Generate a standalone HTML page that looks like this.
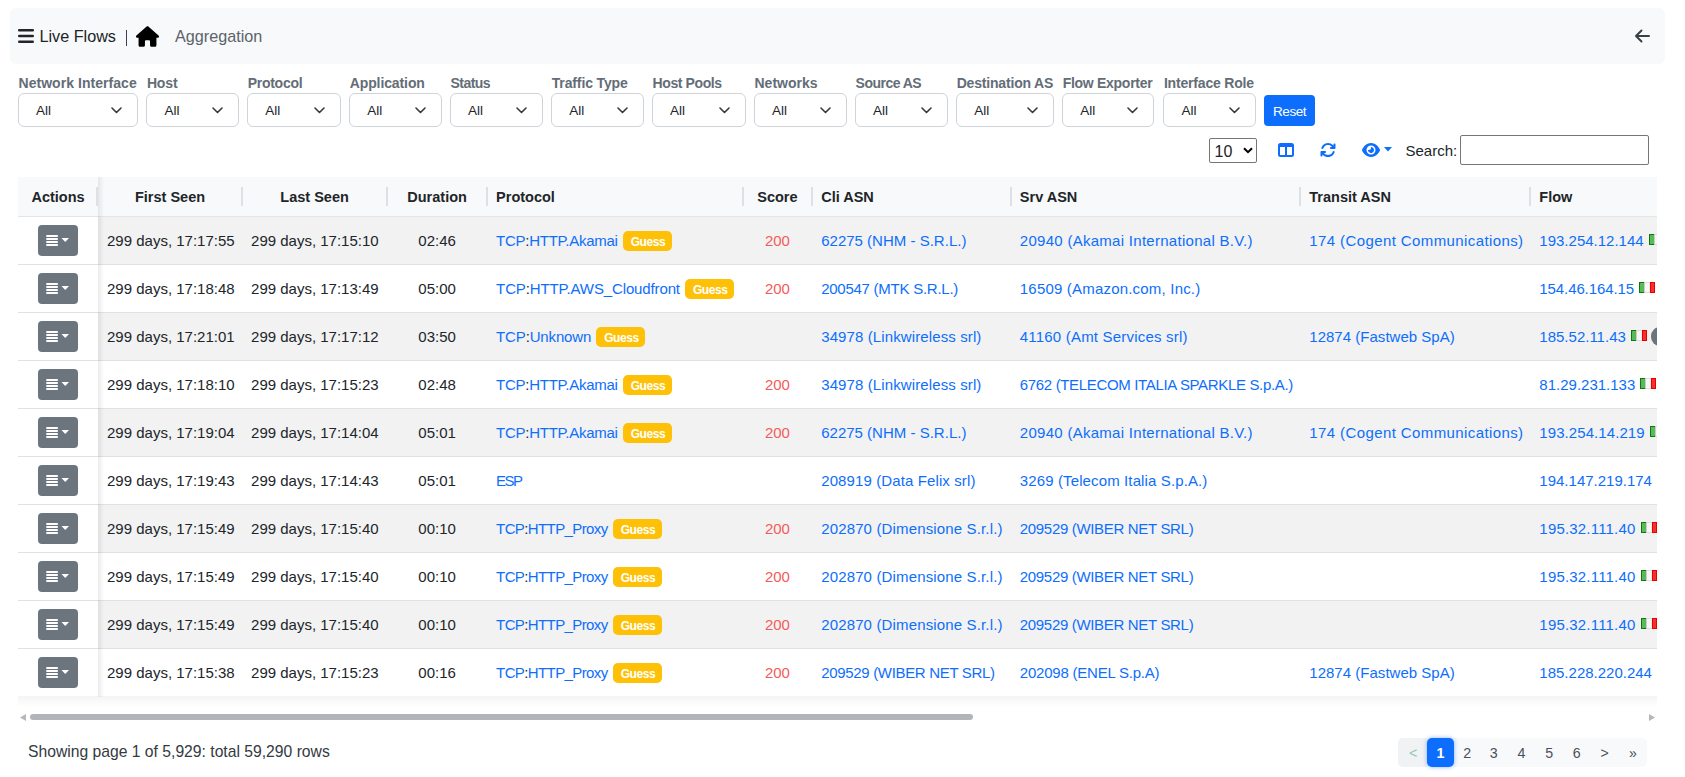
<!DOCTYPE html>
<html><head><meta charset="utf-8">
<style>
*{box-sizing:border-box;margin:0;padding:0}
html,body{width:1685px;height:777px;overflow:hidden;background:#fff}
body{font-family:"Liberation Sans",sans-serif;color:#212529;position:relative}
.abs{position:absolute}
#topbar{left:10px;top:8px;width:1655px;height:56px;background:#f8f9fa;border-radius:6px}
.t{position:absolute;white-space:nowrap;line-height:1}
.hdr{font-size:16.2px}
.lbl{font-weight:bold;font-size:14px;color:#636d77}
.sel{position:absolute;top:93px;height:34px;border:1px solid #ced4da;border-radius:6px;background:#fff}
.sel span{position:absolute;left:17px;top:10px;font-size:13.5px;color:#212529;line-height:1}
.sel svg{position:absolute;right:15px;top:13px}
#reset{left:1264px;top:95px;width:51px;height:31px;background:#0d6efd;border-radius:4px;color:#fff;font-size:14.5px}
#tbl{left:18px;top:177px;width:1639px;height:520px;overflow:hidden}
table{border-collapse:collapse;table-layout:fixed;width:1712.5px}
th{height:39px;background:#f8f9fa;font-weight:bold;font-size:14.5px;text-align:left;padding:0 9px;border-bottom:1px solid #e3e6e9;position:relative;white-space:nowrap}
th.c,td.c{text-align:center}
th .sep{position:absolute;right:-1px;top:10px;width:2px;height:19px;background:#dde0e4;z-index:3}
th.act .sep{right:0}
td{height:48px;font-size:15px;padding:0 9px;border-bottom:1px solid #dee2e6;white-space:nowrap}
tr.odd td{background:#f2f2f2}
td.act{position:relative;background:#fff !important;text-align:center;padding:0}
th.act{text-align:center;padding:0}
a{color:#0d6efd;text-decoration:none}
.k{color:#212529}
.badge{display:inline-block;background:#ffc107;color:#fff;font-weight:bold;font-size:12px;letter-spacing:-0.4px;padding:0 6.6px 0 8px;height:20px;line-height:23px;border-radius:5px;vertical-align:0px;margin:-4px 0 -4px 5px}
.red{color:#f55a5a}
.btn{display:inline-block;width:40px;height:31px;background:#6c757d;border-radius:4px;vertical-align:middle;position:relative}
.flag{display:inline-block;vertical-align:1px;margin-left:5px}
.circ{display:inline-block;width:20px;height:19px;border-radius:9px;background:#6c757d;margin:-10px 0 -10px 4px;vertical-align:6px}
#actshadow{position:absolute;left:80px;top:0;width:6px;height:520px;background:linear-gradient(90deg,rgba(0,0,0,.08),rgba(0,0,0,0))}
#tshadow{left:18px;top:696px;width:1639px;height:11px;background:linear-gradient(180deg,rgba(0,0,0,.045),rgba(0,0,0,0))}
.pgi,.pgact{font-size:14.2px;text-align:center;line-height:30px}
.pgact{background:#0d6efd;color:#fff;border-radius:5px;box-shadow:0 0 4px rgba(13,110,253,.5);font-weight:bold}

tbody tr:last-child td{border-bottom:none}
.thx{position:relative;top:1px}

</style></head><body>
<div id="topbar" class="abs"></div>
<svg class="abs" style="left:18px;top:29px" width="16" height="14" viewBox="0 0 16 14"><rect x="0" y="0" width="16" height="2.6" rx="1.3" fill="#212529"/><rect x="0" y="5.7" width="16" height="2.6" rx="1.3" fill="#212529"/><rect x="0" y="11.4" width="16" height="2.6" rx="1.3" fill="#212529"/></svg>
<div class="t hdr" style="left:39.5px;top:28px;">Live Flows</div>
<div class="abs" style="left:125.8px;top:30px;width:1px;height:16px;background:#3d3f4a"></div>
<svg class="abs" style="left:136px;top:26px" width="23" height="21" viewBox="0 0 576 512"><path fill="#000" d="M575.8 255.5c0 18-15 32.1-32 32.1h-32l.7 160.2c0 2.7-.2 5.400-.5 8.100V472c0 22.100-17.900 40-40 40H456c-1.100 0-2.200 0-3.300-.1-1.400 .1-2.800 .1-4.200 .1H416 392c-22.100 0-40-17.900-40-40V448 384c0-17.700-14.300-32-32-32H256c-17.700 0-32 14.300-32 32v64 24c0 22.100-17.900 40-40 40H160 128.100c-1.500 0-3-.1-4.500-.2-1.200 .1-2.400 .2-3.600 .2H104c-22.100 0-40-17.900-40-40V360c0-.9 0-1.900 .1-2.800V287.600H32c-18 0-32-14-32-32.100 0-9 3-17 10-24L266.400 8c7-7 15-8 22-8s15 2 21 7L564.800 231.500c8 7 12 15 11 24z"/></svg>
<div class="t hdr" style="left:175px;top:28px;color:#5c636a">Aggregation</div>
<svg class="abs" style="left:1634px;top:29px" width="16" height="14" viewBox="0 0 16 14"><path d="M15 7H2M7.5 1.5L2 7l5.5 5.5" stroke="#3a4047" stroke-width="2" fill="none" stroke-linecap="round" stroke-linejoin="round"/></svg>
<div class="t lbl" style="left:18.5px;top:76px;letter-spacing:0.044px">Network Interface</div>
<div class="sel" style="left:18px;width:120px"><span>All</span><svg width="11" height="7" viewBox="0 0 11 7"><path d="M1 1l4.5 4.5L10 1" stroke="#343a40" stroke-width="1.6" fill="none" stroke-linecap="round" stroke-linejoin="round"/></svg></div>
<div class="t lbl" style="left:146.9px;top:76px;letter-spacing:-0.133px">Host</div>
<div class="sel" style="left:146.4px;width:92.4px"><span>All</span><svg width="11" height="7" viewBox="0 0 11 7"><path d="M1 1l4.5 4.5L10 1" stroke="#343a40" stroke-width="1.6" fill="none" stroke-linecap="round" stroke-linejoin="round"/></svg></div>
<div class="t lbl" style="left:247.7px;top:76px;letter-spacing:-0.271px">Protocol</div>
<div class="sel" style="left:247.2px;width:93.4px"><span>All</span><svg width="11" height="7" viewBox="0 0 11 7"><path d="M1 1l4.5 4.5L10 1" stroke="#343a40" stroke-width="1.6" fill="none" stroke-linecap="round" stroke-linejoin="round"/></svg></div>
<div class="t lbl" style="left:349.7px;top:76px;letter-spacing:-0.1px">Application</div>
<div class="sel" style="left:349.2px;width:92.6px"><span>All</span><svg width="11" height="7" viewBox="0 0 11 7"><path d="M1 1l4.5 4.5L10 1" stroke="#343a40" stroke-width="1.6" fill="none" stroke-linecap="round" stroke-linejoin="round"/></svg></div>
<div class="t lbl" style="left:450.6px;top:76px;letter-spacing:-0.58px">Status</div>
<div class="sel" style="left:450.1px;width:92.6px"><span>All</span><svg width="11" height="7" viewBox="0 0 11 7"><path d="M1 1l4.5 4.5L10 1" stroke="#343a40" stroke-width="1.6" fill="none" stroke-linecap="round" stroke-linejoin="round"/></svg></div>
<div class="t lbl" style="left:551.7px;top:76px;letter-spacing:-0.127px">Traffic Type</div>
<div class="sel" style="left:551.2px;width:92.7px"><span>All</span><svg width="11" height="7" viewBox="0 0 11 7"><path d="M1 1l4.5 4.5L10 1" stroke="#343a40" stroke-width="1.6" fill="none" stroke-linecap="round" stroke-linejoin="round"/></svg></div>
<div class="t lbl" style="left:652.6px;top:76px;letter-spacing:-0.4px">Host Pools</div>
<div class="sel" style="left:652.1px;width:93.5px"><span>All</span><svg width="11" height="7" viewBox="0 0 11 7"><path d="M1 1l4.5 4.5L10 1" stroke="#343a40" stroke-width="1.6" fill="none" stroke-linecap="round" stroke-linejoin="round"/></svg></div>
<div class="t lbl" style="left:754.5px;top:76px;letter-spacing:0.0px">Networks</div>
<div class="sel" style="left:754px;width:92.8px"><span>All</span><svg width="11" height="7" viewBox="0 0 11 7"><path d="M1 1l4.5 4.5L10 1" stroke="#343a40" stroke-width="1.6" fill="none" stroke-linecap="round" stroke-linejoin="round"/></svg></div>
<div class="t lbl" style="left:855.6px;top:76px;letter-spacing:-0.525px">Source AS</div>
<div class="sel" style="left:855.1px;width:92.6px"><span>All</span><svg width="11" height="7" viewBox="0 0 11 7"><path d="M1 1l4.5 4.5L10 1" stroke="#343a40" stroke-width="1.6" fill="none" stroke-linecap="round" stroke-linejoin="round"/></svg></div>
<div class="t lbl" style="left:956.7px;top:76px;letter-spacing:-0.185px">Destination AS</div>
<div class="sel" style="left:956.2px;width:97.5px"><span>All</span><svg width="11" height="7" viewBox="0 0 11 7"><path d="M1 1l4.5 4.5L10 1" stroke="#343a40" stroke-width="1.6" fill="none" stroke-linecap="round" stroke-linejoin="round"/></svg></div>
<div class="t lbl" style="left:1062.7px;top:76px;letter-spacing:-0.283px">Flow Exporter</div>
<div class="sel" style="left:1062.2px;width:92.3px"><span>All</span><svg width="11" height="7" viewBox="0 0 11 7"><path d="M1 1l4.5 4.5L10 1" stroke="#343a40" stroke-width="1.6" fill="none" stroke-linecap="round" stroke-linejoin="round"/></svg></div>
<div class="t lbl" style="left:1163.9px;top:76px;letter-spacing:-0.185px">Interface Role</div>
<div class="sel" style="left:1163.4px;width:92.6px"><span>All</span><svg width="11" height="7" viewBox="0 0 11 7"><path d="M1 1l4.5 4.5L10 1" stroke="#343a40" stroke-width="1.6" fill="none" stroke-linecap="round" stroke-linejoin="round"/></svg></div>
<div id="reset" class="abs"><span class="t" style="left:9px;top:9.5px;font-size:13.6px;letter-spacing:-0.5px">Reset</span></div>
<div class="abs" style="left:1209px;top:138px;width:48px;height:25px;border:1px solid #767676;border-radius:2px;background:#fff"></div>
<div class="t " style="left:1214.5px;top:144px;font-size:16px;color:#212529">10</div>
<svg class="abs" style="left:1243px;top:147px" width="10" height="7" viewBox="0 0 10 7"><path d="M1 1.2l4 4 4-4" stroke="#000" stroke-width="2" fill="none"/></svg>
<svg class="abs" style="left:1278px;top:143px" width="16" height="14" viewBox="0 0 16 14"><rect x="1" y="1" width="14" height="12" rx="1.5" fill="none" stroke="#0d6efd" stroke-width="2"/><rect x="1" y="1" width="14" height="3" fill="#0d6efd"/><rect x="7" y="1" width="2" height="12" fill="#0d6efd"/></svg>
<svg class="abs" style="left:1320px;top:142px" width="16" height="16" viewBox="0 0 512 512"><path fill="#0d6efd" d="M105.1 202.600c7.700-21.800 20.200-42.300 37.800-59.800 62.500-62.500 163.800-62.500 226.300 0L386.300 160H352c-17.700 0-32 14.300-32 32s14.300 32 32 32H463.500c0 0 0 0 0 0h.4c17.700 0 32-14.300 32-32V80c0-17.700-14.300-32-32-32s-32 14.300-32 32v35.200L414.400 97.600C327 10.100 185.200 10.100 97.800 97.600 73.400 122 55.600 150.700 44.800 181.400c-5.900 16.700 2.900 34.900 19.500 40.800s34.900-2.900 40.800-19.500zM39 289.300c-5 1.500-9.800 4.200-13.700 8.200-4 4-6.700 8.800-8.100 14-.3 1.200-.6 2.500-.8 3.800-.3 1.700-.4 3.400-.4 5.100V432c0 17.700 14.300 32 32 32s32-14.300 32-32V396.900l17.600 17.500 0 0c87.500 87.400 229.300 87.400 316.700 0 24.400-24.400 42.100-53.100 52.900-83.700 5.900-16.700-2.900-34.900-19.500-40.800s-34.900 2.900-40.800 19.500c-7.700 21.800-20.200 42.300-37.800 59.800-62.500 62.500-163.800 62.500-226.300 0l-.1-.1L125.600 352H160c17.700 0 32-14.300 32-32s-14.300-32-32-32H48.400c-1.600 0-3.200 .1-4.800 .3s-3.100 .5-4.600 1z"/></svg>
<svg class="abs" style="left:1362px;top:143px" width="18" height="14" viewBox="0 32 576 448"><path fill="#0d6efd" d="M288 32c-80.800 0-145.500 36.800-192.600 80.600C48.600 156 17.300 208 2.500 243.700c-3.300 7.900-3.300 16.700 0 24.600C17.300 304 48.600 356 95.400 399.400C142.500 443.200 207.200 480 288 480s145.500-36.800 192.600-80.600c46.800-43.500 78.100-95.400 93-131.100c3.300-7.900 3.300-16.700 0-24.600c-14.900-35.700-46.200-87.700-93-131.100C433.500 68.800 368.800 32 288 32zM144 256a144 144 0 1 1 288 0 144 144 0 1 1 -288 0zm144-64c0 35.300-28.700 64-64 64c-7.100 0-13.900-1.200-20.300-3.300c-5.500-1.800-11.900 1.600-11.700 7.400c.3 6.900 1.300 13.800 3.200 20.700c13.700 51.200 66.400 81.600 117.600 67.900s81.600-66.400 67.900-117.600c-11.100-41.500-47.800-69.400-88.600-71.100c-5.800-.2-9.200 6.100-7.400 11.700c2.100 6.400 3.300 13.200 3.300 20.300z"/></svg>
<svg class="abs" style="left:1384px;top:147px" width="8" height="5" viewBox="0 0 8 5"><path d="M0 0h8L4 4.5z" fill="#0d6efd"/></svg>
<div class="t " style="left:1405.5px;top:143px;font-size:15px;color:#212529">Search:</div>
<div class="abs" style="left:1460px;top:135px;width:189px;height:30px;border:1px solid #767676;border-radius:2px;background:#fff"></div>
<div id="tbl" class="abs"><table><colgroup><col style="width:80px"><col style="width:144px"><col style="width:145px"><col style="width:100px"><col style="width:255.5px"><col style="width:69.5px"><col style="width:198.6px"><col style="width:289.4px"><col style="width:230px"><col style="width:200px"></colgroup><thead><tr><th class="act"><span class="thx">Actions</span><i class="sep"></i></th><th class="c"><span class="thx">First Seen</span><i class="sep"></i></th><th class="c"><span class="thx">Last Seen</span><i class="sep"></i></th><th class="c"><span class="thx">Duration</span><i class="sep"></i></th><th class=""><span class="thx">Protocol</span><i class="sep"></i></th><th class="c"><span class="thx">Score</span><i class="sep"></i></th><th class=""><span class="thx">Cli ASN</span><i class="sep"></i></th><th class=""><span class="thx">Srv ASN</span><i class="sep"></i></th><th class=""><span class="thx">Transit ASN</span><i class="sep"></i></th><th class=""><span class="thx">Flow</span></th></tr></thead><tbody><tr class="odd"><td class="act"><span class="btn"><svg class="abs" style="left:8px;top:10px" width="24" height="11" viewBox="0 0 24 11"><rect x="0.3" y="0" width="11.5" height="2" fill="#fff"/><rect x="0.3" y="3" width="11.5" height="2" fill="#fff"/><rect x="0.3" y="6" width="11.5" height="2" fill="#fff"/><rect x="0.3" y="9" width="11.5" height="2" fill="#fff"/><path d="M15.5 3h7.5l-3.75 4z" fill="#fff"/></svg></span></td><td class="c">299 days, 17:17:55</td><td class="c">299 days, 17:15:10</td><td class="c">02:46</td><td><a style="letter-spacing:-0.271px">TCP<span class="k">:</span>HTTP.Akamai</a><span class="badge">Guess</span></td><td class="c red">200</td><td><a style="letter-spacing:0.011px">62275 (NHM - S.R.L.)</a></td><td><a style="letter-spacing:0.281px">20940 (Akamai International B.V.)</a></td><td><a style="letter-spacing:0.4px">174 (Cogent Communications)</a></td><td><a style="letter-spacing:0px">193.254.12.144</a><svg class="flag" width="16" height="11" viewBox="0 0 16 11"><rect x="0.5" y="0.5" width="5" height="10" fill="#5cb85c" stroke="#0a7a0a"/><rect x="5.5" y="0.5" width="5.5" height="10" fill="#f7f7f7" stroke="#d6d6d6" stroke-width="0.8"/><rect x="11.5" y="0.5" width="4" height="10" fill="#f53030" stroke="#e80000"/></svg></td></tr><tr class=""><td class="act"><span class="btn"><svg class="abs" style="left:8px;top:10px" width="24" height="11" viewBox="0 0 24 11"><rect x="0.3" y="0" width="11.5" height="2" fill="#fff"/><rect x="0.3" y="3" width="11.5" height="2" fill="#fff"/><rect x="0.3" y="6" width="11.5" height="2" fill="#fff"/><rect x="0.3" y="9" width="11.5" height="2" fill="#fff"/><path d="M15.5 3h7.5l-3.75 4z" fill="#fff"/></svg></span></td><td class="c">299 days, 17:18:48</td><td class="c">299 days, 17:13:49</td><td class="c">05:00</td><td><a style="letter-spacing:-0.127px">TCP<span class="k">:</span>HTTP.AWS_Cloudfront</a><span class="badge">Guess</span></td><td class="c red">200</td><td><a style="letter-spacing:-0.256px">200547 (MTK S.R.L.)</a></td><td><a style="letter-spacing:0.196px">16509 (Amazon.com, Inc.)</a></td><td></td><td><a style="letter-spacing:-0.1px">154.46.164.15</a><svg class="flag" width="16" height="11" viewBox="0 0 16 11"><rect x="0.5" y="0.5" width="5" height="10" fill="#5cb85c" stroke="#0a7a0a"/><rect x="5.5" y="0.5" width="5.5" height="10" fill="#f7f7f7" stroke="#d6d6d6" stroke-width="0.8"/><rect x="11.5" y="0.5" width="4" height="10" fill="#f53030" stroke="#e80000"/></svg></td></tr><tr class="odd"><td class="act"><span class="btn"><svg class="abs" style="left:8px;top:10px" width="24" height="11" viewBox="0 0 24 11"><rect x="0.3" y="0" width="11.5" height="2" fill="#fff"/><rect x="0.3" y="3" width="11.5" height="2" fill="#fff"/><rect x="0.3" y="6" width="11.5" height="2" fill="#fff"/><rect x="0.3" y="9" width="11.5" height="2" fill="#fff"/><path d="M15.5 3h7.5l-3.75 4z" fill="#fff"/></svg></span></td><td class="c">299 days, 17:21:01</td><td class="c">299 days, 17:17:12</td><td class="c">03:50</td><td><a style="letter-spacing:-0.15px">TCP<span class="k">:</span>Unknown</a><span class="badge">Guess</span></td><td class="c red"></td><td><a style="letter-spacing:0.113px">34978 (Linkwireless srl)</a></td><td><a style="letter-spacing:0.196px">41160 (Amt Services srl)</a></td><td><a style="letter-spacing:0.022px">12874 (Fastweb SpA)</a></td><td><a style="letter-spacing:0px">185.52.11.43</a><svg class="flag" width="16" height="11" viewBox="0 0 16 11"><rect x="0.5" y="0.5" width="5" height="10" fill="#5cb85c" stroke="#0a7a0a"/><rect x="5.5" y="0.5" width="5.5" height="10" fill="#f7f7f7" stroke="#d6d6d6" stroke-width="0.8"/><rect x="11.5" y="0.5" width="4" height="10" fill="#f53030" stroke="#e80000"/></svg><span class="circ"></span></td></tr><tr class=""><td class="act"><span class="btn"><svg class="abs" style="left:8px;top:10px" width="24" height="11" viewBox="0 0 24 11"><rect x="0.3" y="0" width="11.5" height="2" fill="#fff"/><rect x="0.3" y="3" width="11.5" height="2" fill="#fff"/><rect x="0.3" y="6" width="11.5" height="2" fill="#fff"/><rect x="0.3" y="9" width="11.5" height="2" fill="#fff"/><path d="M15.5 3h7.5l-3.75 4z" fill="#fff"/></svg></span></td><td class="c">299 days, 17:18:10</td><td class="c">299 days, 17:15:23</td><td class="c">02:48</td><td><a style="letter-spacing:-0.271px">TCP<span class="k">:</span>HTTP.Akamai</a><span class="badge">Guess</span></td><td class="c red">200</td><td><a style="letter-spacing:0.113px">34978 (Linkwireless srl)</a></td><td><a style="letter-spacing:-0.343px">6762 (TELECOM ITALIA SPARKLE S.p.A.)</a></td><td></td><td><a style="letter-spacing:0px">81.29.231.133</a><svg class="flag" width="16" height="11" viewBox="0 0 16 11"><rect x="0.5" y="0.5" width="5" height="10" fill="#5cb85c" stroke="#0a7a0a"/><rect x="5.5" y="0.5" width="5.5" height="10" fill="#f7f7f7" stroke="#d6d6d6" stroke-width="0.8"/><rect x="11.5" y="0.5" width="4" height="10" fill="#f53030" stroke="#e80000"/></svg></td></tr><tr class="odd"><td class="act"><span class="btn"><svg class="abs" style="left:8px;top:10px" width="24" height="11" viewBox="0 0 24 11"><rect x="0.3" y="0" width="11.5" height="2" fill="#fff"/><rect x="0.3" y="3" width="11.5" height="2" fill="#fff"/><rect x="0.3" y="6" width="11.5" height="2" fill="#fff"/><rect x="0.3" y="9" width="11.5" height="2" fill="#fff"/><path d="M15.5 3h7.5l-3.75 4z" fill="#fff"/></svg></span></td><td class="c">299 days, 17:19:04</td><td class="c">299 days, 17:14:04</td><td class="c">05:01</td><td><a style="letter-spacing:-0.271px">TCP<span class="k">:</span>HTTP.Akamai</a><span class="badge">Guess</span></td><td class="c red">200</td><td><a style="letter-spacing:0.011px">62275 (NHM - S.R.L.)</a></td><td><a style="letter-spacing:0.281px">20940 (Akamai International B.V.)</a></td><td><a style="letter-spacing:0.4px">174 (Cogent Communications)</a></td><td><a style="letter-spacing:0.077px">193.254.14.219</a><svg class="flag" width="16" height="11" viewBox="0 0 16 11"><rect x="0.5" y="0.5" width="5" height="10" fill="#5cb85c" stroke="#0a7a0a"/><rect x="5.5" y="0.5" width="5.5" height="10" fill="#f7f7f7" stroke="#d6d6d6" stroke-width="0.8"/><rect x="11.5" y="0.5" width="4" height="10" fill="#f53030" stroke="#e80000"/></svg></td></tr><tr class=""><td class="act"><span class="btn"><svg class="abs" style="left:8px;top:10px" width="24" height="11" viewBox="0 0 24 11"><rect x="0.3" y="0" width="11.5" height="2" fill="#fff"/><rect x="0.3" y="3" width="11.5" height="2" fill="#fff"/><rect x="0.3" y="6" width="11.5" height="2" fill="#fff"/><rect x="0.3" y="9" width="11.5" height="2" fill="#fff"/><path d="M15.5 3h7.5l-3.75 4z" fill="#fff"/></svg></span></td><td class="c">299 days, 17:19:43</td><td class="c">299 days, 17:14:43</td><td class="c">05:01</td><td><a style="letter-spacing:-1.5px">ESP</a></td><td class="c red"></td><td><a style="letter-spacing:0.114px">208919 (Data Felix srl)</a></td><td><a style="letter-spacing:0.122px">3269 (Telecom Italia S.p.A.)</a></td><td></td><td><a style="letter-spacing:0px">194.147.219.174</a></td></tr><tr class="odd"><td class="act"><span class="btn"><svg class="abs" style="left:8px;top:10px" width="24" height="11" viewBox="0 0 24 11"><rect x="0.3" y="0" width="11.5" height="2" fill="#fff"/><rect x="0.3" y="3" width="11.5" height="2" fill="#fff"/><rect x="0.3" y="6" width="11.5" height="2" fill="#fff"/><rect x="0.3" y="9" width="11.5" height="2" fill="#fff"/><path d="M15.5 3h7.5l-3.75 4z" fill="#fff"/></svg></span></td><td class="c">299 days, 17:15:49</td><td class="c">299 days, 17:15:40</td><td class="c">00:10</td><td><a style="letter-spacing:-0.608px">TCP<span class="k">:</span>HTTP_Proxy</a><span class="badge">Guess</span></td><td class="c red">200</td><td><a style="letter-spacing:0.148px">202870 (Dimensione S.r.l.)</a></td><td><a style="letter-spacing:-0.324px">209529 (WIBER NET SRL)</a></td><td></td><td><a style="letter-spacing:0.19px">195.32.111.40</a><svg class="flag" width="16" height="11" viewBox="0 0 16 11"><rect x="0.5" y="0.5" width="5" height="10" fill="#5cb85c" stroke="#0a7a0a"/><rect x="5.5" y="0.5" width="5.5" height="10" fill="#f7f7f7" stroke="#d6d6d6" stroke-width="0.8"/><rect x="11.5" y="0.5" width="4" height="10" fill="#f53030" stroke="#e80000"/></svg></td></tr><tr class=""><td class="act"><span class="btn"><svg class="abs" style="left:8px;top:10px" width="24" height="11" viewBox="0 0 24 11"><rect x="0.3" y="0" width="11.5" height="2" fill="#fff"/><rect x="0.3" y="3" width="11.5" height="2" fill="#fff"/><rect x="0.3" y="6" width="11.5" height="2" fill="#fff"/><rect x="0.3" y="9" width="11.5" height="2" fill="#fff"/><path d="M15.5 3h7.5l-3.75 4z" fill="#fff"/></svg></span></td><td class="c">299 days, 17:15:49</td><td class="c">299 days, 17:15:40</td><td class="c">00:10</td><td><a style="letter-spacing:-0.608px">TCP<span class="k">:</span>HTTP_Proxy</a><span class="badge">Guess</span></td><td class="c red">200</td><td><a style="letter-spacing:0.148px">202870 (Dimensione S.r.l.)</a></td><td><a style="letter-spacing:-0.324px">209529 (WIBER NET SRL)</a></td><td></td><td><a style="letter-spacing:0.19px">195.32.111.40</a><svg class="flag" width="16" height="11" viewBox="0 0 16 11"><rect x="0.5" y="0.5" width="5" height="10" fill="#5cb85c" stroke="#0a7a0a"/><rect x="5.5" y="0.5" width="5.5" height="10" fill="#f7f7f7" stroke="#d6d6d6" stroke-width="0.8"/><rect x="11.5" y="0.5" width="4" height="10" fill="#f53030" stroke="#e80000"/></svg></td></tr><tr class="odd"><td class="act"><span class="btn"><svg class="abs" style="left:8px;top:10px" width="24" height="11" viewBox="0 0 24 11"><rect x="0.3" y="0" width="11.5" height="2" fill="#fff"/><rect x="0.3" y="3" width="11.5" height="2" fill="#fff"/><rect x="0.3" y="6" width="11.5" height="2" fill="#fff"/><rect x="0.3" y="9" width="11.5" height="2" fill="#fff"/><path d="M15.5 3h7.5l-3.75 4z" fill="#fff"/></svg></span></td><td class="c">299 days, 17:15:49</td><td class="c">299 days, 17:15:40</td><td class="c">00:10</td><td><a style="letter-spacing:-0.608px">TCP<span class="k">:</span>HTTP_Proxy</a><span class="badge">Guess</span></td><td class="c red">200</td><td><a style="letter-spacing:0.148px">202870 (Dimensione S.r.l.)</a></td><td><a style="letter-spacing:-0.324px">209529 (WIBER NET SRL)</a></td><td></td><td><a style="letter-spacing:0.19px">195.32.111.40</a><svg class="flag" width="16" height="11" viewBox="0 0 16 11"><rect x="0.5" y="0.5" width="5" height="10" fill="#5cb85c" stroke="#0a7a0a"/><rect x="5.5" y="0.5" width="5.5" height="10" fill="#f7f7f7" stroke="#d6d6d6" stroke-width="0.8"/><rect x="11.5" y="0.5" width="4" height="10" fill="#f53030" stroke="#e80000"/></svg></td></tr><tr class=""><td class="act"><span class="btn"><svg class="abs" style="left:8px;top:10px" width="24" height="11" viewBox="0 0 24 11"><rect x="0.3" y="0" width="11.5" height="2" fill="#fff"/><rect x="0.3" y="3" width="11.5" height="2" fill="#fff"/><rect x="0.3" y="6" width="11.5" height="2" fill="#fff"/><rect x="0.3" y="9" width="11.5" height="2" fill="#fff"/><path d="M15.5 3h7.5l-3.75 4z" fill="#fff"/></svg></span></td><td class="c">299 days, 17:15:38</td><td class="c">299 days, 17:15:23</td><td class="c">00:16</td><td><a style="letter-spacing:-0.608px">TCP<span class="k">:</span>HTTP_Proxy</a><span class="badge">Guess</span></td><td class="c red">200</td><td><a style="letter-spacing:-0.324px">209529 (WIBER NET SRL)</a></td><td><a style="letter-spacing:-0.217px">202098 (ENEL S.p.A)</a></td><td><a style="letter-spacing:0.022px">12874 (Fastweb SpA)</a></td><td><a style="letter-spacing:0px">185.228.220.244</a></td></tr></tbody></table><div id="actshadow"></div></div>
<div id="tshadow" class="abs"></div>
<svg class="abs" style="left:20px;top:714px" width="6" height="7" viewBox="0 0 6 7"><path d="M6 0v7L0 3.5z" fill="#b4b8bc"/></svg>
<div class="abs" style="left:30px;top:714px;width:943px;height:6px;border-radius:3px;background:#b1b5b9"></div>
<svg class="abs" style="left:1649px;top:714px" width="6" height="7" viewBox="0 0 6 7"><path d="M0 0v7L6 3.5z" fill="#b4b8bc"/></svg>
<div class="t " style="left:28px;top:743.5px;font-size:15.7px;color:#343a40">Showing page 1 of 5,929: total 59,290 rows</div>
<div class="abs" style="left:1398px;top:738px;width:249px;height:29px;background:#f8f9fa;border-radius:5px"></div>
<div class="abs pgi" style="left:1398px;top:738px;width:28.5px;height:29px;color:#8fc6b4;background:#f0f2f4;border-radius:5px 0 0 5px;padding-left:2px;line-height:31px">&lt;</div>
<div class="abs pgact" style="left:1426.8px;top:738px;width:27.3px;height:29px">1</div>
<div class="abs pgi" style="left:1454.1px;top:738px;width:26px;height:29px;color:#495057">2</div>
<div class="abs pgi" style="left:1480.1px;top:738px;width:27.3px;height:29px;color:#495057">3</div>
<div class="abs pgi" style="left:1507.4px;top:738px;width:28px;height:29px;color:#495057">4</div>
<div class="abs pgi" style="left:1535.4px;top:738px;width:27.5px;height:29px;color:#495057">5</div>
<div class="abs pgi" style="left:1562.9px;top:738px;width:27.6px;height:29px;color:#495057">6</div>
<div class="abs pgi" style="left:1590.5px;top:738px;width:28.2px;height:29px;color:#495057">&gt;</div>
<div class="abs pgi" style="left:1618.7px;top:738px;width:28.3px;height:29px;color:#495057">&raquo;</div>
</body></html>
